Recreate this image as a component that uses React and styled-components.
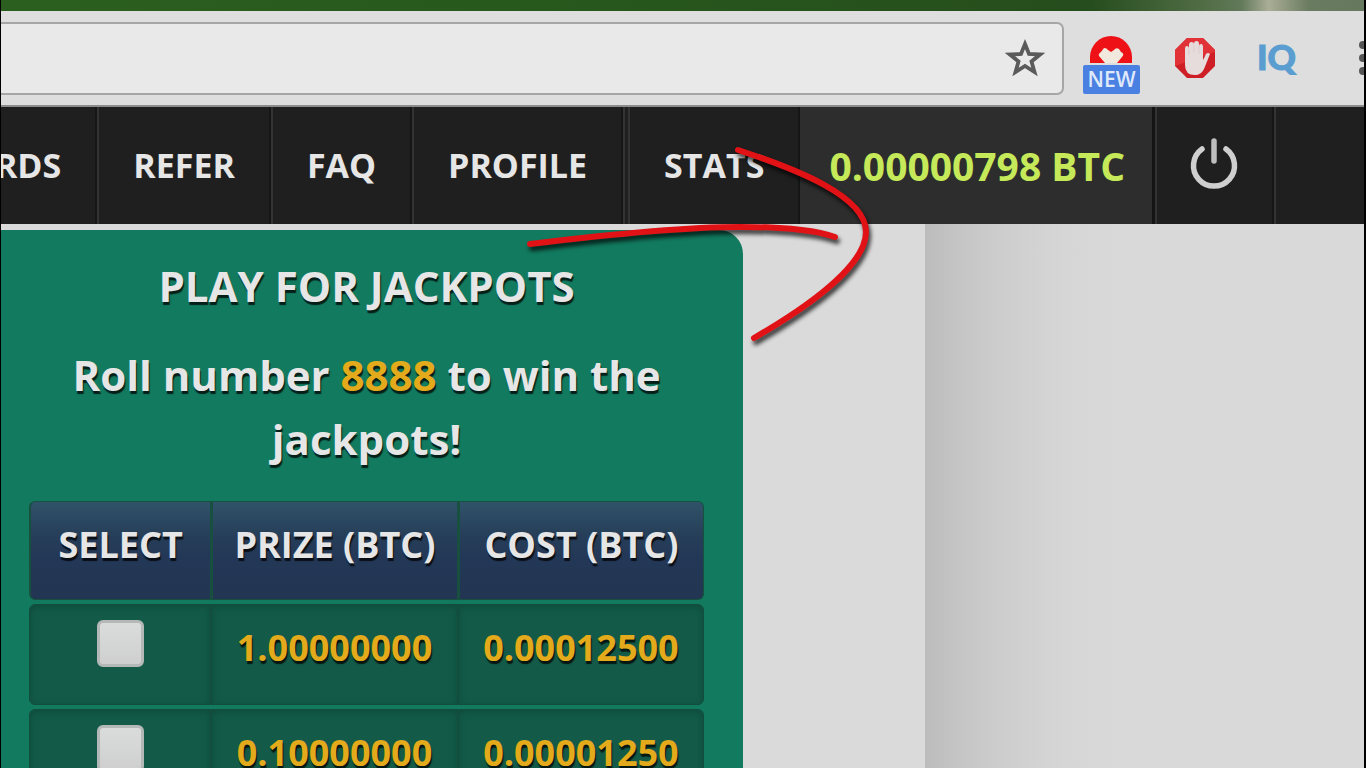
import React, { useState } from 'react';
import styled, { createGlobalStyle } from 'styled-components';

const navItems = ['REWARDS', 'REFER', 'FAQ', 'PROFILE', 'STATS'];

const jackpots = [
    { prize: '1.00000000', cost: '0.00012500' },
    { prize: '0.10000000', cost: '0.00001250' },
];

function BrowserBar() {
    return (
        <Toolbar>
            <AddressBar>
                <Address type="text" aria-label="Address" />
                <IconButton aria-label="Bookmark this page">
                    <svg width="40" height="40" viewBox="0 0 40 40">
                        <path
                            d="M20 6 L24 16 L35 16.5 L26.5 23.4 L29.5 34 L20 28 L10.5 34 L13.5 23.4 L5 16.5 L16 16 Z"
                            fill="none" stroke="#5a5a5a" strokeWidth="3.8" strokeLinejoin="miter"
                        />
                    </svg>
                </IconButton>
            </AddressBar>
            <Extensions>
                <NewButton aria-label="New">
                    <svg width="44" height="27" viewBox="0 0 44 27">
                        <path d="M1 27 V21 A21 21 0 0 1 43 21 V27 Z" fill="#ee1216" />
                        <path d="M16 27 L10 20 Q9 18 12 16 L15 12 Q18 12 19 14 L22 16 L25 14 Q27 11 30 13 L32 16 Q36 18 33 21 L28 27 Z" fill="#f1e9dd" />
                    </svg>
                    <Tag>NEW</Tag>
                </NewButton>
                <IconButton aria-label="Ad blocker">
                    <svg width="42" height="42" viewBox="0 0 42 42">
                        <path d="M13 1 H29 L41 13 V29 L29 41 H13 L1 29 V13 Z" fill="#cf1f26" />
                        <path d="M13 1 H29 L41 13 V15 L1 29 V13 Z" fill="#e03237" />
                        <path
                            d="M11 12 Q11 9 13 9 Q15 9 15 12 V8 Q15 5 17.5 5 Q20 5 20 7 Q20 4 22.5 4 Q25 4 25 7 V9 Q25 7 27 7 Q29 7 29 10 V23 L32 17 Q34 15 36 17 L30 32 Q27 38 21 38 Q11 38 11 28 Z"
                            fill="#e6dcdc"
                        />
                        <path d="M15 12 V18 M20 8 V16 M25 9 V17" stroke="#dfcaca" strokeWidth="1" />
                    </svg>
                </IconButton>
                <IqButton>IQ</IqButton>
            </Extensions>
            <IconButton aria-label="Menu">
                <svg width="6" height="36" viewBox="0 0 6 36">
                    <circle cx="5" cy="5" r="4" fill="#555" />
                    <circle cx="5" cy="18" r="4" fill="#555" />
                    <circle cx="5" cy="31" r="4" fill="#555" />
                </svg>
            </IconButton>
        </Toolbar>
    );
}

function Navigation() {
    return (
        <Nav>
            {navItems.map((item) => (
                <NavLink key={item} href={'#' + item.toLowerCase()} $divided={item === 'STATS'}>{item}</NavLink>
            ))}
            <Balance href="#balance">0.00000798 BTC</Balance>
            <Logout aria-label="Log out">
                <svg width="50" height="52" viewBox="0 0 50 52">
                    <path d="M13 12 A20.5 20.5 0 1 0 37 12" fill="none" stroke="#cfcfcf" strokeWidth="5.5" strokeLinecap="round" />
                    <path d="M25 4 V24" stroke="#bdbdbd" strokeWidth="5.5" strokeLinecap="round" />
                </svg>
            </Logout>
            <NavEnd />
        </Nav>
    );
}

function Jackpots() {
    const [selected, setSelected] = useState({});

    const toggle = (prize) => setSelected({ ...selected, [prize]: !selected[prize] });

    return (
        <Panel>
            <Title>PLAY FOR JACKPOTS</Title>
            <Lead>Roll number <Lucky>8888</Lucky> to win the jackpots!</Lead>
            <Table>
                <thead>
                    <tr>
                        <Head $width="27%">SELECT</Head>
                        <Head>PRIZE (BTC)</Head>
                        <Head>COST (BTC)</Head>
                    </tr>
                </thead>
                <tbody>
                    {jackpots.map(({ prize, cost }) => (
                        <tr key={prize}>
                            <Cell>
                                <Checkbox
                                    type="checkbox"
                                    aria-label={'Play for ' + prize + ' BTC'}
                                    checked={!!selected[prize]}
                                    onChange={() => toggle(prize)}
                                />
                            </Cell>
                            <Cell>{prize}</Cell>
                            <Cell>{cost}</Cell>
                        </tr>
                    ))}
                </tbody>
            </Table>
        </Panel>
    );
}

// Hand-drawn arrow pointing at the balance
function Arrow() {
    return (
        <ArrowSvg width="360" height="210" viewBox="520 140 360 210" aria-hidden="true">
            <path d="M530 244 C620 233 690 227 740 227 C780 227 812 229 835 237" />
            <path d="M738 150 C796 169 866 196 866 232 C866 266 806 308 754 338" />
        </ArrowSvg>
    );
}

export default function App() {
    return (
        <Screen>
            <GlobalStyle />
            <Wallpaper />
            <BrowserBar />
            <Navigation />
            <Page>
                <Content>
                    <Jackpots />
                </Content>
                <Side />
            </Page>
            <Arrow />
        </Screen>
    );
}

const GlobalStyle = createGlobalStyle`
    * {
        box-sizing: border-box;
    }

    body {
        margin: 0;
        background-color: black;
        font-family: 'Open Sans', sans-serif;
        font-weight: 700;
        color: #e6e6e6;
    }
`

const Screen = styled.div`
    position: relative;
    display: flex;
    flex-direction: column;
    height: 100vh;
    overflow: hidden;
    border-left: 1px solid black;
    border-right: 2px solid black;
`

const Wallpaper = styled.div`
    flex: none;
    height: 11px;
    background: linear-gradient(to right, #2b5f1f 0%, #27581c 40%, #264d1d 80%, #55704a 89%, #62795a 91%, #aaae96 93%, #697b60 96%, #66785e 100%);
`

const Toolbar = styled.div`
    flex: none;
    display: flex;
    align-items: center;
    height: 96px;
    border-bottom: 2px solid #8c8c8c;
    background-color: #dedede;
`

const AddressBar = styled.div`
    flex: 1;
    display: flex;
    align-items: center;
    height: 73px;
    padding-right: 17px;
    border: 2px solid #a6a6a6;
    border-left: none;
    border-radius: 0 7px 7px 0;
    background-color: #e9e9e9;
`

const Address = styled.input`
    flex: 1;
    height: 100%;
    border: none;
    outline: none;
    background: none;
    font-size: 32px;
`

const Extensions = styled.div`
    display: flex;
    align-items: center;
    gap: 34px;
    margin: 0 62px 0 19px;
`

const IconButton = styled.button`
    display: flex;
    padding: 0;
    border: none;
    background: none;
    cursor: pointer;
`

const NewButton = styled(IconButton)`
    flex-direction: column;
    align-items: center;
    gap: 2px;
    padding-top: 14px;
`

const Tag = styled.span`
    width: 57px;
    border-radius: 2px;
    background-color: #4a80e2;
    color: #dfe9fa;
    font-family: 'Open Sans', sans-serif;
    font-size: 21px;
    font-weight: 600;
    line-height: 29px;
    text-align: center;
`

const IqButton = styled(IconButton)`
    margin-left: 7px;
    padding-bottom: 5px;
    color: #5a9dd0;
    font-family: Lato, sans-serif;
    font-size: 35px;
    font-weight: 900;
    line-height: 40px;
    -webkit-text-stroke: 1px #5a9dd0;
`

const Nav = styled.nav`
    flex: none;
    display: flex;
    justify-content: flex-end;
    height: 117px;
    overflow: hidden;
    background-color: #1f1f1f;
    line-height: 117px;
`

const NavLink = styled.a`
    flex: none;
    padding: 0 34px;
    border-left: ${props => props.$divided ? '7px double #333333' : '2px solid #333333'};
    border-right: 2px solid #161616;
    color: #e6e6e6;
    font-size: 34px;
    text-decoration: none;
`

const Balance = styled.a`
    flex: none;
    padding: 0 27px 0 29px;
    background-color: #2d2d2d;
    border-right: 3px solid #141414;
    color: #c5e959;
    font-size: 39px;
    text-decoration: none;
`

const Logout = styled.button`
    flex: none;
    display: flex;
    align-items: center;
    justify-content: center;
    width: 119px;
    padding: 0 2px 6px 0;
    border: solid;
    border-width: 0 2px;
    border-color: #161616 #161616 #161616 #333333;
    background: none;
    cursor: pointer;
`

const NavEnd = styled.div`
    flex: none;
    width: 90px;
    border-left: 2px solid #333333;
`

const Page = styled.main`
    flex: 1;
    display: flex;
    min-height: 0;
    background-color: #dadada;
`

const Content = styled.div`
    width: 67.8%;
    padding: 6px 182px 0 0;
`

const Side = styled.div`
    flex: 1;
    background: linear-gradient(to right, #bcbcbc 0, #c4c4c4 30px, #cecece 80px, #d6d6d6 140px, #d9d9d9 200px);
`

const Panel = styled.section`
    padding: 24px 39px 24px 28px;
    border-radius: 0 24px 0 0;
    background-color: #127a5f;
    text-align: center;
    text-shadow: 1px 3px 1px rgba(0, 0, 0, 0.75);
`

const Title = styled.h1`
    margin: 0 0 25px;
    font-size: 42px;
    font-weight: 700;
    line-height: 64px;
`

const Lead = styled.p`
    margin: 0 0 26px;
    font-size: 42px;
    line-height: 64px;
`

const Lucky = styled.span`
    color: #e3aa1c;
`

const Table = styled.table`
    width: 100%;
    table-layout: fixed;
    border-spacing: 0 4px;
    font-size: 36px;
    line-height: 48px;
`

const Head = styled.th`
    width: ${props => props.$width || 'auto'};
    height: 99px;
    padding: 19px 0 0;
    border: 1px solid #17503f;
    border-left-width: 2px;
    background: linear-gradient(#30536a 0%, #263e59 35%, #233756 60%, #223653 100%);
    vertical-align: top;

    &:first-child {
        border-radius: 6px 0 0 6px;
    }

    &:last-child {
        border-radius: 0 6px 6px 0;
    }
`

const Cell = styled.td`
    height: 101px;
    padding: 19px 0 0;
    border: 1px solid #134d3e;
    background-color: #135a48;
    box-shadow: inset 0 2px 6px rgba(10, 60, 45, 0.5);
    color: #e3aa1c;
    vertical-align: top;

    &:first-child {
        padding-top: 15px;
        border-radius: 6px 0 0 6px;
    }

    &:last-child {
        border-radius: 0 6px 6px 0;
    }
`

const Checkbox = styled.input`
    appearance: none;
    display: block;
    width: 47px;
    height: 47px;
    margin: 0 auto;
    border: 3px solid #b4b8b6;
    border-radius: 6px;
    background: linear-gradient(#dadcdc, #cfcfcf);

    &:checked {
        background: #4a80e2;
    }
`

const ArrowSvg = styled.svg`
    position: absolute;
    left: 519px;
    top: 140px;
    pointer-events: none;
    fill: none;
    stroke: #e01216;
    stroke-width: 6;
    stroke-linecap: round;
    filter: drop-shadow(2px 4px 2px rgba(0, 0, 0, 0.75));
`
